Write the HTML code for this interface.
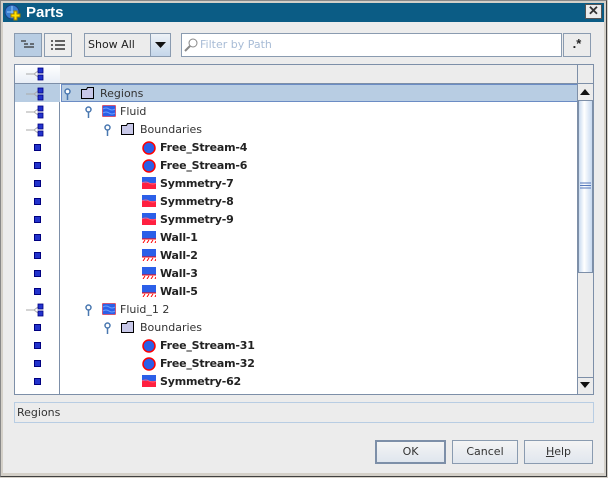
<!DOCTYPE html>
<html><head><style>
*{margin:0;padding:0;box-sizing:border-box}
body{width:608px;height:478px;overflow:hidden;background:#d4d0c8;font-family:"DejaVu Sans","Liberation Sans",sans-serif;font-size:11px;color:#333;position:relative}
.a{position:absolute}
.win{left:0;top:0;width:607px;height:477px;border:1px solid #888;border-right-color:#404040;border-bottom-color:#404040;background:#d4d0c8}
.body{left:3px;top:22px;width:601px;height:451px;background:#ececec}
.title{left:3px;top:3px;width:601px;height:19px;background:#0b5c85;color:#fff;font-family:"Liberation Sans",sans-serif;font-weight:bold;font-size:15px;line-height:19px;padding-left:23px}
.btn{border:1px solid #8a9bb0;background:linear-gradient(#f4f4f4,#e0e6ee);}
.row{height:18px;line-height:20px;white-space:nowrap}
.sq{width:7px;height:7px;background:#2233cc;border:1px solid #000080}
.bold{font-weight:bold;letter-spacing:-0.2px}
</style></head><body>
<div class="a win"></div>
<div class="a body"></div>
<div class="a title">Parts</div>
<svg class="a" style="left:4px;top:4px" width="18" height="17"><circle cx="8" cy="8" r="7" fill="#3a7fd0" stroke="#1a3f80"/><path d="M3 8h10M8 2v12" stroke="#9cf"/><path d="M11 9h3v3h3v3h-3v3h-3v-3h-3v-3h3z" fill="#ffe000" stroke="#a08000" transform="translate(-1,-2)"/></svg>
<div class="a btn" style="left:585px;top:4px;width:17px;height:15px;background:#ececec;border-color:#555;font:bold 13px 'Liberation Sans';text-align:center;line-height:12px">✕</div>

<div class="a btn" style="left:14px;top:33px;width:28px;height:24px;background:#b8cde3"></div>
<svg class="a" style="left:20px;top:40px" width="16" height="10"><path d="M1 1h5M4 4h4M4 7h10M10 4h4" stroke="#333" stroke-width="1.2"/></svg>
<div class="a btn" style="left:44px;top:33px;width:28px;height:24px;background:#eee"></div>
<svg class="a" style="left:50px;top:39px" width="16" height="12"><path d="M1 2h2M5 2h10M1 6h2M5 6h10M1 10h2M5 10h10" stroke="#333" stroke-width="1.4"/></svg>
<div class="a" style="left:84px;top:33px;width:67px;height:24px;border:1px solid #8a9bb0;background:#ececec;line-height:22px;padding-left:3px;color:#222">Show All</div>
<div class="a btn" style="left:150px;top:33px;width:21px;height:24px;background:linear-gradient(#eef2f7,#c4d6ea)"></div>
<svg class="a" style="left:155px;top:42px" width="11" height="6"><path d="M0 0h11L5.5 6z" fill="#111"/></svg>
<div class="a" style="left:181px;top:33px;width:381px;height:24px;border:1px solid #8a9bb0;background:#fff;color:#a8bcd6;line-height:22px;padding-left:18px">Filter by Path</div>
<svg class="a" style="left:183px;top:37px" width="16" height="16"><circle cx="10" cy="6" r="4" fill="none" stroke="#888"/><path d="M7 9l-5 5" stroke="#888" stroke-width="2"/></svg>
<div class="a btn" style="left:563px;top:33px;width:28px;height:24px;background:#ececec;font:bold 13px 'Liberation Sans';color:#222;text-align:center;line-height:20px">.*</div>

<div class="a" style="left:14px;top:64px;width:580px;height:331px;border:1px solid #7d8fa8;background:#fff"></div>
<div class="a" style="left:15px;top:65px;width:578px;height:19px;background:#ececec;border-bottom:1px solid #7d8fa8"></div>
<div class="a" style="left:15px;top:65px;width:45px;height:329px;background:#fff;border-right:1px solid #7d8fa8"></div>
<div class="a" style="left:15px;top:65px;width:45px;height:19px;background:linear-gradient(#fff,#e8eef6);border-bottom:1px solid #7d8fa8"></div>
<div class="a" style="left:15px;top:84px;width:45px;height:18px;background:#b8cde3"></div>
<div class="a" style="left:61px;top:84px;width:517px;height:18px;background:#b8cde3;border:1px solid #6b8cc4"></div>

<div class="a" style="left:577px;top:65px;width:1px;height:19px;background:#7d8fa8"></div>
<div class="a" style="left:577px;top:84px;width:16px;height:310px;background:#ececec;border-left:1px solid #7d8fa8"></div>
<svg class="a" style="left:580px;top:89px" width="10" height="6"><path d="M0 6h10L5 0z" fill="#111"/></svg>
<div class="a" style="left:578px;top:100px;width:15px;height:173px;background:linear-gradient(90deg,#c8daf0,#fff 40%,#c8daf0);border:1px solid #7d8fa8"></div>
<svg class="a" style="left:580px;top:182px" width="11" height="7"><path d="M0 1h11M0 3.5h11M0 6h11" stroke="#5577bb"/></svg>
<div class="a" style="left:578px;top:377px;width:15px;height:17px;border-top:1px solid #7d8fa8"></div>
<svg class="a" style="left:580px;top:382px" width="10" height="6"><path d="M0 0h10L5 6z" fill="#111"/></svg>

<div id="rows"></div>

<div class="a" style="left:14px;top:402px;width:580px;height:21px;border:1px solid #b8cde3;background:#ececec;line-height:19px;padding-left:2px;color:#333">Regions</div>

<div class="a btn" style="left:375px;top:440px;width:71px;height:24px;border:2px solid #7d8fa8;text-align:center;line-height:20px">OK</div>
<div class="a btn" style="left:452px;top:440px;width:66px;height:24px;text-align:center;line-height:22px">Cancel</div>
<div class="a btn" style="left:524px;top:440px;width:69px;height:24px;text-align:center;line-height:22px"><u>H</u>elp</div>

<script>
const tree='<svg width="22" height="14"><path d="M2 7h8M10 7l4-3M10 7l4 3" stroke="#aaa" fill="none"/><rect x="14" y="1" width="5" height="5" fill="#2233cc" stroke="#000080" stroke-width=".8"/><rect x="14" y="8" width="5" height="5" fill="#2233cc" stroke="#000080" stroke-width=".8"/></svg>';
const pin='<svg width="7" height="12"><circle cx="3.5" cy="3.5" r="2.5" fill="#fff" stroke="#4a78b0" stroke-width="1.5"/><path d="M3.5 6v6" stroke="#4a78b0" stroke-width="1.5"/></svg>';
const folder='<svg width="14" height="12"><path d="M0.5 2.5h5l1-2h6v11h-12z" fill="#c8c8e8" stroke="#000"/></svg>';
const region='<svg width="14" height="12"><rect x=".5" y=".5" width="13" height="11" fill="#2b5fe8" stroke="#f00" stroke-dasharray="1 1"/><path d="M1 4q3-2 6 0t6 0M1 8q3-2 6 0t6 0" stroke="#6aa0ff" fill="none"/></svg>';
const fs='<svg width="14" height="14"><circle cx="7" cy="7" r="6" fill="#2b5fe8" stroke="#f00" stroke-width="1.5"/></svg>';
const sym='<svg width="14" height="12"><rect width="14" height="6" fill="#2b5fe8"/><rect y="6" width="14" height="6" fill="#ff2040"/><path d="M0 6q3.5-2 7 0t7 0" stroke="#ff6080" fill="none"/></svg>';
const wall='<svg width="14" height="12"><rect width="14" height="8" fill="#2b5fe8"/><path d="M0 8h14" stroke="#f00"/><path d="M1 12l2-3M5 12l2-3M9 12l2-3M13 12l1-2" stroke="#f00"/></svg>';
const rows=[
[1,0,folder,'Regions',0],[1,1,region,'Fluid',0],[1,2,folder,'Boundaries',0],
[0,3,fs,'Free_Stream-4',1],[0,3,fs,'Free_Stream-6',1],[0,3,sym,'Symmetry-7',1],[0,3,sym,'Symmetry-8',1],[0,3,sym,'Symmetry-9',1],
[0,3,wall,'Wall-1',1],[0,3,wall,'Wall-2',1],[0,3,wall,'Wall-3',1],[0,3,wall,'Wall-5',1],
[1,1,region,'Fluid_1 2',0],[0,2,folder,'Boundaries',0],[0,3,fs,'Free_Stream-31',1],[0,3,fs,'Free_Stream-32',1],[0,3,sym,'Symmetry-62',1]];
let h='<div class="a" style="left:24px;top:67px">'+tree+'</div>';
const pinX=[64,85,104],icX=[81,102,121,142],txX=[100,120,140,160];
rows.forEach((r,i)=>{const y=84+18*i;
h+= r[0]?'<div class="a" style="left:24px;top:'+(y+3)+'px">'+tree+'</div>':'<div class="a sq" style="left:34px;top:'+(y+6)+'px"></div>';
if(r[1]<3)h+='<div class="a" style="left:'+pinX[r[1]]+'px;top:'+(y+4)+'px">'+pin+'</div>';
h+='<div class="a" style="left:'+icX[r[1]]+'px;top:'+(y+3)+'px;line-height:0">'+r[2]+'</div>';
h+='<div class="a row'+(r[4]?' bold':'')+'" style="left:'+txX[r[1]]+'px;top:'+y+'px;color:'+(r[4]?'#222':'#333')+'">'+r[3]+'</div>';});
document.getElementById('rows').innerHTML=h;
</script>
</body></html>
